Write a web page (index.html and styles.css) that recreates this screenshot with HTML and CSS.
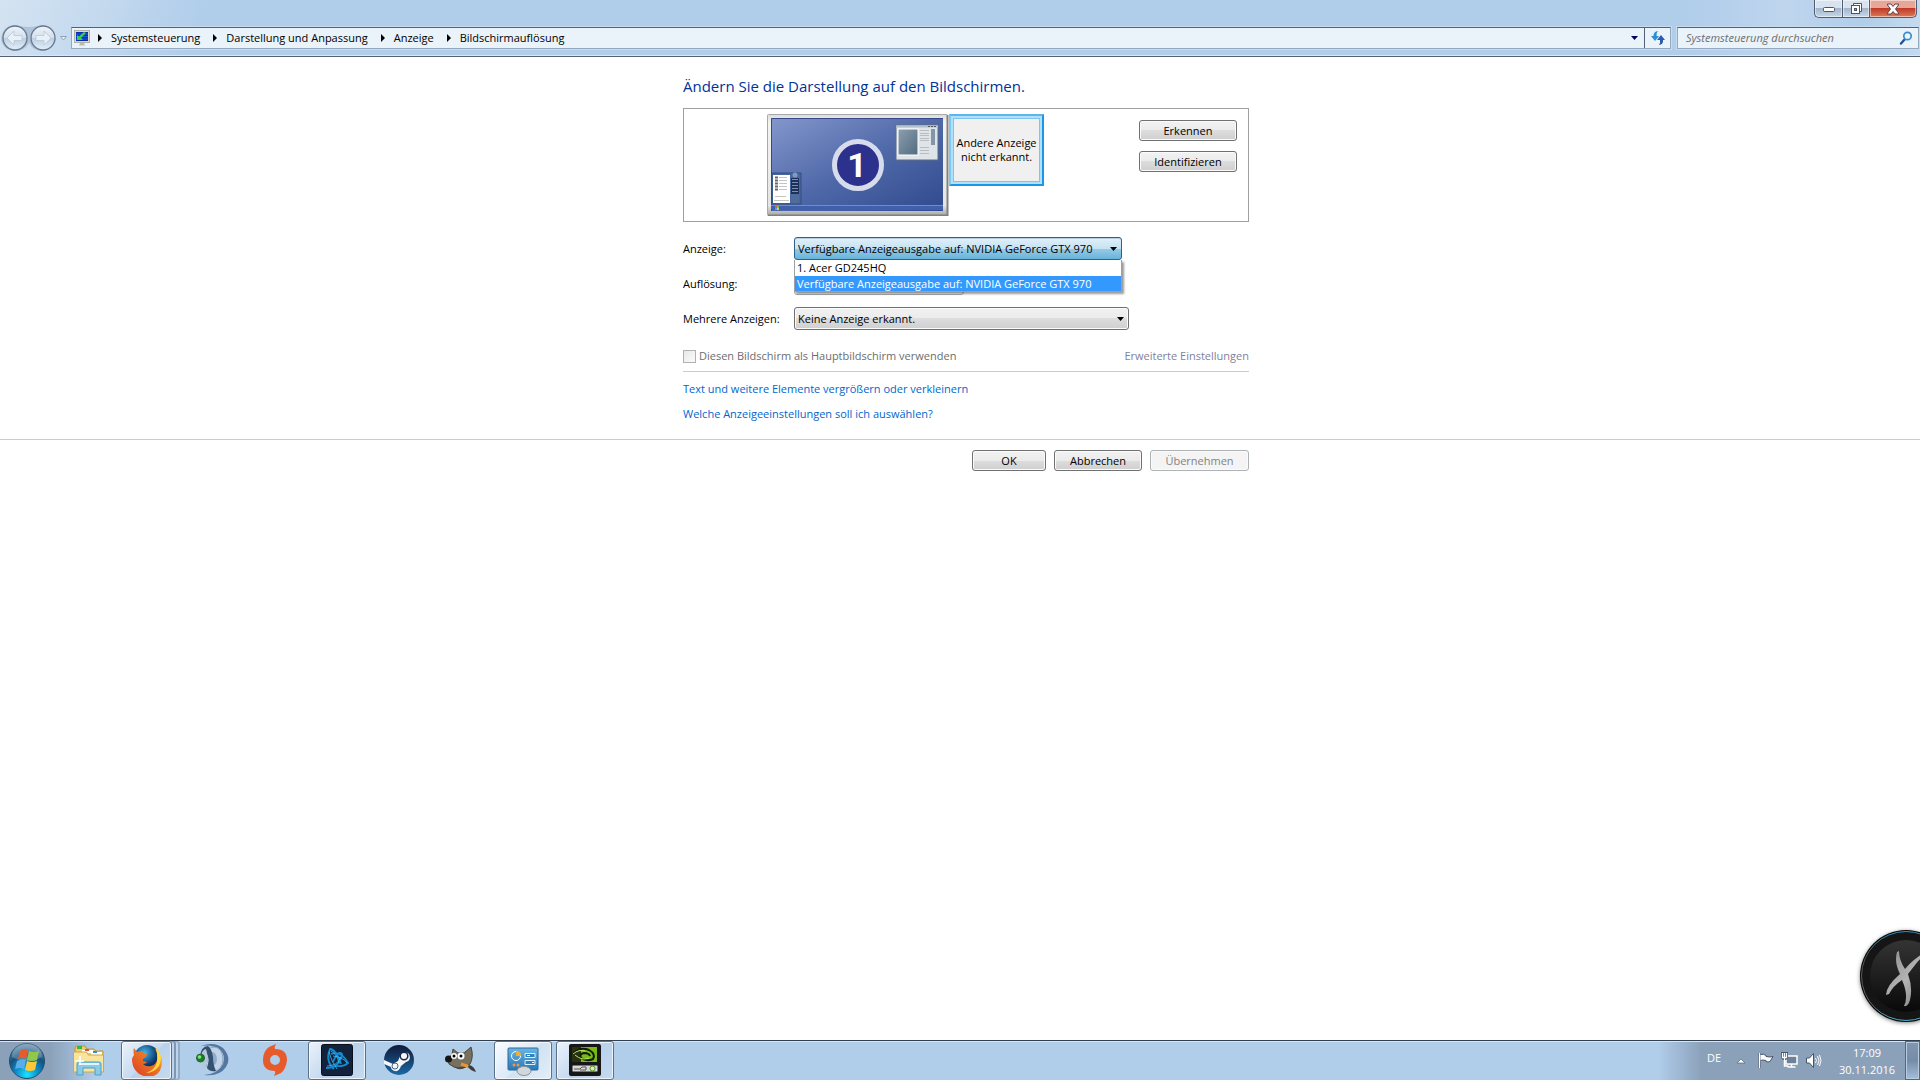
FILE: index.html
```html
<!DOCTYPE html>
<html lang="de">
<head>
<meta charset="utf-8">
<title>Bildschirmauflösung</title>
<link rel="stylesheet" href="styles.css">
</head>
<body>
<header class="frame">
  <div class="caption">
    <button class="cap cap-min" aria-label="Minimieren"><svg width="14" height="8" viewBox="0 0 14 8"><rect x="1.500" y="2.500" width="11" height="4" rx="1" fill="#fff" stroke="#4d5668"/></svg></button>
    <button class="cap cap-max" aria-label="Verkleinern"><svg width="13" height="13" viewBox="0 0 13 13"><path d="M3.500 3.500V1.500h8v8h-2" fill="#fff" stroke="#4d5668"/><rect x="1.500" y="3.500" width="8" height="8" fill="#fff" stroke="#4d5668"/><rect x="4.500" y="6.500" width="2" height="2" fill="#9aabc0" stroke="#4d5668"/></svg></button>
    <button class="cap cap-close" aria-label="Schließen"><svg width="14" height="12" viewBox="0 0 14 12"><path d="M1.500 1h3.500l2 2.500L9 1h3.500v1L9.500 6l3 4v1H9L7 8.500 5 11H1.500v-1l3-4-3-4z" fill="#fff" stroke="#5b4450"/></svg></button>
  </div>
  <div class="navbar">
    <svg class="nav-buttons" width="69" height="28" viewBox="0 0 69 28">
      <defs><linearGradient id="nb" x1="0" y1="0" x2="0" y2="1"><stop offset="0" stop-color="#eef4fa"/><stop offset=".48" stop-color="#d3e0ed"/><stop offset=".52" stop-color="#bccfe2"/><stop offset="1" stop-color="#e4f0fa"/></linearGradient></defs>
      <path d="M14 1Q29 5 43 1v3Q52 8 56 15 50 27 43 27q-10 0-14-8-4 8-14 8Q2 26 1 14 3 2 14 1z" fill="#a4b8ce" opacity=".7"/>
      <circle cx="15" cy="14" r="12" fill="url(#nb)" stroke="#68798f" stroke-width="1.300"/>
      <circle cx="43" cy="14" r="12" fill="url(#nb)" stroke="#68798f" stroke-width="1.300"/>
      <path d="M7 14l7-7v4.500h8v5h-8V21zM51 14l-7-7v4.500h-8v5h8V21z" fill="#e9f1f8" stroke="#b9c8d8" stroke-width=".8"/>
      <path d="M60.500 12.500h6L63.500 16z" fill="#e5eef7" stroke="#8fa5be"/>
    </svg>
    <nav class="address" aria-label="Adresse">
      <svg width="16" height="16" viewBox="0 0 16 16"><rect x=".5" y=".5" width="15" height="12" fill="#d8d8cf" stroke="#b0b0a8"/><rect x="2" y="2" width="12" height="9" fill="#0b2fa8"/><path d="M2 4h12M2 6.500h12M2 9h12" stroke="#1f58d8"/><path d="M3 10V5l2 1.500L10 2l2 1-5 5 2 2z" fill="#35d24a"/><path d="M6 13h4l1 2.500H5z" fill="#bcbcb4"/></svg>
      <ol class="crumbs">
        <li><svg class="tri" viewBox="0 0 4 8"><path d="M0 0l4 4-4 4z"/></svg><a href="#">Systemsteuerung</a></li>
        <li><svg class="tri" viewBox="0 0 4 8"><path d="M0 0l4 4-4 4z"/></svg><a href="#">Darstellung und Anpassung</a></li>
        <li><svg class="tri" viewBox="0 0 4 8"><path d="M0 0l4 4-4 4z"/></svg><a href="#">Anzeige</a></li>
        <li><svg class="tri" viewBox="0 0 4 8"><path d="M0 0l4 4-4 4z"/></svg><a href="#">Bildschirmauflösung</a></li>
      </ol>
      <button class="addr-drop" aria-label="Verlauf"><svg width="7" height="4" viewBox="0 0 7 4"><path d="M0 0h7L3.500 4z" fill="#000060"/></svg></button>
      <button class="addr-refresh" aria-label="Aktualisieren"><svg width="14" height="14" viewBox="0 0 14 14"><path d="M7 0Q2.500.5 2.500 5H0l4 5 4-5H5.500Q5 2 7 0z" fill="#2e8fd0"/><path d="M8 14q4.500-.5 4-5h2l-4-5-4 5h3q.5 3-1 5z" fill="#2b5aae"/></svg></button>
    </nav>
    <form class="search">
      <input type="search" placeholder="Systemsteuerung durchsuchen" aria-label="Systemsteuerung durchsuchen">
      <svg width="14" height="14" viewBox="0 0 14 14"><path d="M6 8L2 12.500" stroke="#27509c" stroke-width="2.400" stroke-linecap="round"/><circle cx="8.500" cy="5" r="3.700" fill="#e8f6fd" stroke="#3c8ccc" stroke-width="1.700"/></svg>
    </form>
  </div>
</header>

<main class="page">
  <section class="column">
    <h1>Ändern Sie die Darstellung auf den Bildschirmen.</h1>
    <div class="preview">
      <svg class="monitor" width="182" height="102" viewBox="0 0 182 102" role="img" aria-label="Anzeige 1">
        <defs>
          <linearGradient id="scr" x1="0" y1="0" x2="1" y2="1"><stop offset="0" stop-color="#8497cc"/><stop offset=".5" stop-color="#5069a9"/><stop offset="1" stop-color="#304a8e"/></linearGradient>
          <linearGradient id="pic" x1="0" y1="0" x2="1" y2="1"><stop offset="0" stop-color="#8c9fae"/><stop offset="1" stop-color="#526b82"/></linearGradient>
          <linearGradient id="bez" x1="0" y1="0" x2="0" y2="1"><stop offset="0" stop-color="#dcdcdc"/><stop offset=".08" stop-color="#f3f3f1"/><stop offset=".9" stop-color="#e5e5e3"/><stop offset="1" stop-color="#a6a6a6"/></linearGradient>
        </defs>
        <rect x=".5" y=".5" width="180" height="101" rx="1" fill="url(#bez)" stroke="#a9a9a9"/>
        <path d="M180.500 1v100.500H1" fill="none" stroke="#808080" stroke-width="2"/>
        <rect x="4" y="4" width="172" height="93" fill="url(#scr)"/>
        <path d="M4.500 97V4.500H176" fill="none" stroke="#35498a"/>
        <rect x="4" y="91" width="172" height="5" fill="#3f60ac"/><path d="M4 91.500h172" stroke="#6f8dcb"/>
        <rect x="8" y="92" width="2" height="2" fill="#e0633c"/><rect x="10" y="92" width="2" height="2" fill="#78c050"/><rect x="8" y="94" width="2" height="2" fill="#4aa0e8"/><rect x="10" y="94" width="2" height="2" fill="#e8cd4c"/>
        <rect x="129" y="11" width="42" height="35" fill="#dfe4e9" stroke="#5c6e86"/><path d="M129 12.500h42" stroke="#b4bfcc" stroke-width="2"/><path d="M161 12.500h9" stroke="#555" stroke-dasharray="2 1"/>
        <rect x="131" y="15" width="20" height="26" fill="url(#pic)" stroke="#fff"/>
        <path d="M153 16.500h9m-9 3h9m-9 2h9m-9 3h9m-9 2h9m-9 7h9m-9 3h9m-9 3h9" stroke="#b9bdc1"/><rect x="164" y="15" width="4" height="16" fill="#8296a8"/>
        <rect x="5" y="59" width="29" height="31" fill="#46679f" stroke="#354f82"/><path d="M24 75h8v14h-8z" fill="#4f6c9c"/><rect x="6" y="61" width="17" height="28" fill="#fff"/>
        <path d="M8 63.500h3m-3 3h3m-3 3h3m-3 3h3m-3 3h3" stroke="#666" stroke-width="2"/><path d="M12 63.500h8m-8 3h8m-8 3h8m-8 3h8m-8 3h8M8 82.500h11M7 86.500h15" stroke="#c4c4c4"/>
        <circle cx="28" cy="61" r="2.500" fill="#829ac0"/><path d="M24 64h8v16h-8z" fill="#1e3158"/><path d="M25 65.500h6m-6 3h6m-6 3h6m-6 3h6m-6 3h6" stroke="#7b8fb4"/>
        <circle cx="91" cy="51" r="23.500" fill="#2b318d" stroke="#d7dcec" stroke-width="5"/>
        <text x="90" y="63" class="monitor-number">1</text>
      </svg>
      <div class="monitor-missing">Andere Anzeige<br>nicht erkannt.</div>
      <div class="preview-actions"><button class="btn">Erkennen</button><button class="btn">Identifizieren</button></div>
    </div>

    <div class="fields">
      <label for="display">Anzeige:</label>
      <div class="combo combo-open">
        <select id="display"><option>Verfügbare Anzeigeausgabe auf: NVIDIA GeForce GTX 970</option></select>
        <svg class="arrow" width="7" height="4" viewBox="0 0 7 4"><path d="M0 0h7L3.500 4z"/></svg>
        <ul class="options" role="listbox" aria-label="Anzeige">
          <li role="option" aria-selected="false">1. Acer GD245HQ</li>
          <li role="option" aria-selected="true">Verfügbare Anzeigeausgabe auf: NVIDIA GeForce GTX 970</li>
        </ul>
      </div>
      <label for="resolution">Auflösung:</label>
      <div class="combo combo-small"><select id="resolution" disabled></select></div>
      <label for="multi">Mehrere Anzeigen:</label>
      <div class="combo">
        <select id="multi"><option>Keine Anzeige erkannt.</option></select>
        <svg class="arrow" width="7" height="4" viewBox="0 0 7 4"><path d="M0 0h7L3.500 4z"/></svg>
      </div>
    </div>

    <div class="main-row">
      <label><input type="checkbox" disabled>Diesen Bildschirm als Hauptbildschirm verwenden</label>
      <a href="#" class="muted">Erweiterte Einstellungen</a>
    </div>
    <div class="links">
      <a href="#">Text und weitere Elemente vergrößern oder verkleinern</a>
      <a href="#">Welche Anzeigeeinstellungen soll ich auswählen?</a>
    </div>
  </section>
  <footer class="footer">
    <div class="column actions">
      <button class="btn ok">OK</button><button class="btn cancel">Abbrechen</button><button class="btn apply" disabled>Übernehmen</button>
    </div>
  </footer>
  <div class="gadget-area">
    <svg class="gadget" width="96" height="96" viewBox="0 0 96 96" aria-hidden="true">
      <defs>
        <linearGradient id="gd" x1="0" y1="0" x2="0" y2="1"><stop offset="0" stop-color="#343434"/><stop offset="1" stop-color="#090909"/></linearGradient>
        <linearGradient id="gx" x1="0" y1="0" x2="1" y2="1"><stop offset="0" stop-color="#8a8a8a"/><stop offset=".5" stop-color="#b4b4b4"/><stop offset="1" stop-color="#707070"/></linearGradient>
        <linearGradient id="gr" x1="0" y1="0" x2="0" y2="1"><stop offset="0" stop-color="#318fc4"/><stop offset=".3" stop-color="#555"/><stop offset=".8" stop-color="#666"/><stop offset="1" stop-color="#48b5cf"/></linearGradient>
      </defs>
      <circle cx="48" cy="48" r="46" fill="#050505"/><circle cx="48" cy="48" r="44.500" fill="#151515" stroke="url(#gr)"/>
      <circle cx="48" cy="48" r="36" fill="url(#gd)"/>
      <path d="M41 23Q41 32 47 41 55 31 72 21 60 32 50 46 55 60 52 72 50 79 46 78 51 68 44 52 35 58 31 66L28 67Q28 58 42 46 36 34 39 24z" fill="url(#gx)"/>
    </svg>
  </div>
</main>

<footer class="taskbar">
  <button class="start" aria-label="Start"><svg width="38" height="38" viewBox="0 0 38 38">
    <defs><radialGradient id="orb" cx=".5" cy=".9" r=".9"><stop offset="0" stop-color="#1ee3ff"/><stop offset=".35" stop-color="#0a8fce"/><stop offset=".65" stop-color="#15527e"/><stop offset="1" stop-color="#7097b3"/></radialGradient></defs>
    <circle cx="19" cy="19" r="17.500" fill="url(#orb)" stroke="#234c6a"/><path d="M4 15a15 14 0 0 1 30 0q-15 8-30 0z" fill="#fff" opacity=".22"/>
    <path d="M12 9q5-3 8-1l-2 9q-4-2-8 0z" fill="#e9592b"/><path d="M21 9q5 2 10 0l-2 9q-5 2-10 0z" fill="#91c848"/><path d="M9 19q5-3 9-1l-2 9q-4-2-9 0z" fill="#58afe8"/><path d="M19 19q5 2 10 0l-2 9q-5 2-10 0z" fill="#fbc73b"/>
  </svg></button>
  <button class="task" aria-label="Explorer"><svg width="34" height="32" viewBox="0 0 34 32">
    <path d="M3 4q0-2 2-2h8l2 3h7l2 2h7v20H3z" fill="#edcc6c" stroke="#bd9736"/><path d="M5 2h5v3H5z" fill="#36b54a"/><path d="M10 6h11v3H10z" fill="#fff"/><path d="M13 5h4v2h-4z" fill="#dd5135"/><path d="M19 8h11v3H19z" fill="#fff"/><path d="M21 7h4v2h-4z" fill="#3490d4"/>
    <path d="M1.500 8h13l2 3h15v17h-30z" fill="#f8e49b" stroke="#cba84b"/><path d="M5 31V20q0-2 2-2h20q2 0 2 2v11h-6v-7H11v7z" fill="#89cae9" stroke="#4ba0ca"/><path d="M7 20h20" stroke="#dff5ff" stroke-width="2"/><path d="M8 12v9M3 17h9" stroke="#fff" stroke-width="1.500"/>
  </svg></button>
  <button class="task active stacked" aria-label="Firefox"><svg width="32" height="32" viewBox="0 0 32 32">
    <defs><radialGradient id="fx" cx=".4" cy=".3"><stop offset="0" stop-color="#42b6e6"/><stop offset="1" stop-color="#0b3268"/></radialGradient><linearGradient id="ff" x1="0" y1="1" x2="1" y2="0"><stop offset="0" stop-color="#d93b22"/><stop offset=".6" stop-color="#ee7626"/><stop offset="1" stop-color="#fddc40"/></linearGradient></defs>
    <circle cx="16" cy="14" r="13" fill="url(#fx)"/><path d="M3 4l3 4 5-1 1 2 4 1-1 3-3 2v2l4 1q-1 2-4 2 3 3 8 2 5-1 6-6 1-6-2-12 6 5 7 13 0 16-15 16Q2 30 1 17q0-4 2-6-1-4 0-7z" fill="url(#ff)"/><path d="M25 4q8 8 3 18-5 7-13 7 9-3 11-11 1-7-1-14z" fill="#ffd83e"/>
  </svg></button>
  <button class="task" aria-label="TeamSpeak"><svg width="34" height="34" viewBox="0 0 34 34">
    <path d="M5 3Q18-2 27 5q9 10 3 19-7 10-22 8 14-1 19-11 3-10-4-15Q15 1 5 3z" fill="#54769f"/>
    <ellipse cx="18" cy="16" rx="9" ry="12" fill="#c3d3e6" stroke="#8ba5c5"/><ellipse cx="16" cy="16" rx="5" ry="7" fill="#8facd0"/>
    <path d="M4 14Q5 3 12 3q4 3 5 11 0 8 3 14-6 1-9-3l2-8-3-10z" fill="#35516f"/>
    <path d="M5 13q1-6 5-7l2 10-3 10q-6-4-4-13z" fill="#b5c8db"/>
    <circle cx="4.500" cy="15" r="4" fill="#188029" stroke="#2e5b35"/><circle cx="3.500" cy="14" r="1.800" fill="#86e57b"/></svg></button>
  <button class="task" aria-label="Origin"><svg width="28" height="34" viewBox="0 0 28 34"><path d="M15 1q-2 3-1 5Q26 6 26 17q-1 9-6 13l-7 3q2-3 1-5Q2 28 2 17 2 8 8 4zM14 12a5 5 0 1 0 0 10 5 5 0 0 0 0-10z" fill="#e65b2b" fill-rule="evenodd"/></svg></button>
  <button class="task active" aria-label="Battle.net"><svg width="32" height="32" viewBox="0 0 32 32"><rect x=".5" y=".5" width="31" height="31" rx="2" fill="#14213b" stroke="#08101e"/><g fill="none" stroke="#128ad0" stroke-width="1.800"><path d="M13 25Q4 17 9 5q6 0 11 15"/><path d="M10 10q10-4 17 9-4 4-13 3"/><path d="M5 24q14 0 16-14-4-4-9 8"/></g><path d="M8 8q2 9 8 17M6 22q10 0 14-9M12 12q10 1 14 7M10 7q6 3 8 12" fill="none" stroke="#48b9ed" stroke-width=".8"/></svg></button>
  <button class="task" aria-label="Steam"><svg width="32" height="32" viewBox="0 0 32 32"><defs><linearGradient id="st" x1="0" y1="0" x2="0" y2="1"><stop offset="0" stop-color="#11193a"/><stop offset="1" stop-color="#1a69a3"/></linearGradient></defs><circle cx="16" cy="16" r="15" fill="url(#st)"/><path d="M1 16l9 4 5-3 2-5a5 5 0 1 1 6 6l-5 4q-2 6-6 5-4-1-4-4l-7-3z" fill="#f4f6f8"/><circle cx="21" cy="12" r="3.800" fill="#f4f6f8" stroke="#18284d" stroke-width="1.500"/><circle cx="12" cy="22" r="3" fill="none" stroke="#496785"/></svg></button>
  <button class="task" aria-label="GIMP"><svg width="34" height="28" viewBox="0 0 34 28"><path d="M27 1q3 10-1 17-8 7-16 3l-5-3q-2-7 3-9l1-6 5 4h6z" fill="#77705f" stroke="#48443c"/><path d="M8 19q6 5 17-1-4 6-11 5z" fill="#4c483f"/><circle cx="4.500" cy="13" r="3.500" fill="#161616"/><circle cx="10" cy="10" r="3" fill="#fff"/><circle cx="17" cy="10" r="3.500" fill="#fff"/><circle cx="10" cy="10" r="1.500"/><circle cx="17" cy="10" r="1.500"/><path d="M17 18l9 3" stroke="#e89632" stroke-width="3"/><path d="M25 19q5 1 7 7-5-1-8-5z" fill="#3c3c3b"/></svg></button>
  <button class="task active bright" aria-label="Systemsteuerung"><svg width="32" height="32" viewBox="0 0 32 32"><defs><linearGradient id="cp" x1="0" y1="0" x2="0" y2="1"><stop offset="0" stop-color="#69b5e4"/><stop offset="1" stop-color="#2877b8"/></linearGradient></defs><rect x="1" y="4" width="30" height="22" rx="1" fill="url(#cp)" stroke="#2c6898"/><circle cx="9" cy="12" r="4.500" fill="none" stroke="#fff"/><path d="M9 12V7q5 0 5 5z" fill="#f6ac32"/><path d="M18 9.500h10v4H18zM18 16.500h10v4H18z" fill="#2a83c2" stroke="#d9f1fe"/><path d="M20 11.500h3m2 7h2" stroke="#fff"/><circle cx="7" cy="21" r="1.500" fill="#ee9a39"/><circle cx="11" cy="21" r="1.500" fill="#ee9a39"/><ellipse cx="17" cy="27" rx="7" ry="4.500" fill="#d4d7da" stroke="#8c9198"/></svg></button>
  <button class="task active" aria-label="NVIDIA"><svg width="32" height="32" viewBox="0 0 32 32"><rect width="32" height="32" rx="2" fill="#171717"/><rect x="3" y="3" width="25" height="15" fill="#79ba17"/><path d="M3 3h9v15H3z" fill="#263210"/><path d="M4 10q7-8 16-4 7 4 4 9-6 3-12-1-2-4 3-5 5 0 6 3" fill="none" stroke="#101c06" stroke-width="2"/><path d="M4 10q6-5 12-3M6 11q7 6 14 3" fill="none" stroke="#b9e764"/><rect x="3.500" y="21.500" width="25" height="6" rx="1" fill="#d8d8d8" stroke="#777"/><path d="M5 25h6l2-2h4v3h-6" fill="none" stroke="#555"/><circle cx="23.500" cy="24.500" r="2.500" fill="#d8efb6" stroke="#4b941a"/></svg></button>
  <div class="tray">
    <span class="lang">DE</span>
    <svg class="chev" width="10" height="6" viewBox="0 0 10 6"><path d="M1 5l4-4 4 4z" fill="#fff" stroke="#53657a" stroke-width=".7"/></svg>
    <svg width="17" height="17" viewBox="0 0 17 17"><path d="M2.500 1v15" stroke="#46566a" stroke-width="3"/><path d="M3 2.500q4-1 6 1v1q4 1 7 0l-3 5q-2 1-4 0v-1q-3-1-6 0z" fill="#fff" stroke="#46566a"/><path d="M2.500 1v15" stroke="#fff" stroke-width="1.500"/></svg>
    <svg width="17" height="17" viewBox="0 0 17 17"><rect x="5" y="4" width="11" height="8" fill="#6d8199" stroke="#fff" stroke-width="1.500"/><path d="M10.500 12v3m-4 0h8M3.500 7v7h4" fill="none" stroke="#fff" stroke-width="1.500"/><path d="M0 0h7v6l-2 2H2L0 6z" fill="#46566a"/><path d="M1.500 1v4.500h4V1M3.500 1v7" fill="none" stroke="#fff" stroke-width="1.300"/></svg>
    <svg width="17" height="17" viewBox="0 0 17 17"><path d="M1.500 6h3l4-4.500v14L4.500 11h-3z" fill="#fff" stroke="#46566a"/><path d="M10.500 6q2 2.500 0 5M12.500 4q3 4.500 0 9M14.500 3q3 5.500 0 11" fill="none" stroke="#fff"/></svg>
    <time class="clock">17:09<br>30.11.2016</time>
  </div>
  <button class="show-desktop" aria-label="Desktop anzeigen"></button>
</footer>
</body>
</html>
```
FILE: styles.css
```css
* { box-sizing: border-box; }
body {
  margin: 0;
  min-height: 100vh;
  display: flex;
  flex-direction: column;
  background: #fff;
  color: #000;
  font: 11px/14px "Open Sans", "Noto Sans", sans-serif;
}
button, input, select { font: inherit; margin: 0; color: inherit; }
button { padding: 0; display: flex; align-items: center; justify-content: center; }
svg { display: block; flex: none; }
a { color: #0066cc; text-decoration: none; }

/* Window frame */
.frame {
  height: 57px;
  display: flex;
  flex-direction: column;
  border-bottom: 1px solid #536173;
  box-shadow: inset 0 -1px #d8e8f7;
  background:
    linear-gradient(115deg, #d4e3f1 0, #c5daef 90px, rgba(176, 205, 234, 0) 190px),
    linear-gradient(90deg, #b0cdea 88%, #bfd5ee 93%, #b0cdea 97%, #c5daef);
}
.caption { display: flex; justify-content: flex-end; height: 18px; padding-right: 3px; }
.cap {
  width: 27px;
  height: 18px;
  border: 1px solid #505d70;
  border-width: 0 0 1px 1px;
  background: linear-gradient(#d7e3ef 0 45%, #9fb2c7 45%, #c7d8e8);
  box-shadow: inset 0 0 0 1px rgba(255, 255, 255, .5);
}
.cap-min { width: 28px; border-bottom-left-radius: 5px; }
.cap-close {
  width: 48px;
  border-right-width: 1px;
  border-bottom-right-radius: 5px;
  background: linear-gradient(#e6a799 0 45%, #bc3522 45%, #dd7a57);
}
.navbar { display: flex; align-items: center; height: 40px; padding: 1px 1px 0 0; }
.nav-buttons { margin-right: 2px; }
.address, .search {
  display: flex;
  align-items: center;
  height: 22px;
  border: 1px solid #94a9bf;
  border-top-color: #536173;
  background: #eaf2fa;
  box-shadow: 0 0 0 1px #c8dcf0;
}
.address { flex: 1; padding-left: 2px; }
.crumbs { display: flex; flex: 1; list-style: none; margin: 0 0 0 8px; padding: 0; gap: 13px; }
.crumbs li { display: flex; align-items: center; gap: 9px; }
.crumbs a { color: #000; }
.tri { width: 4px; height: 8px; }
.addr-drop, .addr-refresh { width: 20px; height: 20px; border: 0; background: none; }
.addr-refresh { width: 26px; border-left: 1px solid #536173; }
.search { width: 242px; margin-left: 6px; padding: 0 5px 0 8px; }
.search input { flex: 1; min-width: 0; padding: 0; border: 0; outline: 0; background: none; font-style: italic; }
.search input::placeholder { color: #6d6d6d; opacity: 1; }

/* Settings page */
.page { flex: 1; display: flex; flex-direction: column; }
.column { width: 578px; max-width: 100%; margin: 0 auto; padding-left: 12px; }
h1 { margin: 19px 0 11px; font-size: 15px; line-height: 21px; font-weight: 400; color: #003399; }
.preview {
  display: flex;
  align-items: flex-start;
  height: 114px;
  padding: 5px 11px 5px 83px;
  border: 1px solid #a0a0a0;
}
.monitor-number { font: bold 34px Roboto, sans-serif; fill: #fff; text-anchor: middle; }
.monitor-missing {
  display: grid;
  place-items: center;
  width: 95px;
  height: 72px;
  border: 2px solid #1c97e8;
  border-left-color: #7cc8f5;
  border-top-color: #5db5ee;
  background: #f0f0f0;
  box-shadow: inset 0 0 0 2px #b2dffa, inset 0 0 0 3px #7fc4ee;
  text-align: center;
  white-space: nowrap;
}
.preview-actions { display: grid; gap: 10px; margin: 6px 0 0 auto; }
.btn {
  width: 98px;
  height: 21px;
  border: 1px solid #707070;
  border-radius: 3px;
  background: linear-gradient(#f2f2f2, #ebebeb 50%, #dddddd 50%, #cfcfcf);
  box-shadow: inset 0 0 0 1px #fbfbfb;
}
.btn:disabled { border-color: #adb2b5; background: #f4f4f4; color: #838383; }
.fields {
  display: grid;
  grid-template-columns: 111px 1fr;
  grid-auto-rows: 23px;
  gap: 12px 0;
  align-items: center;
  margin-top: 15px;
}
.combo { position: relative; width: 335px; }
.combo select {
  display: block;
  width: 100%;
  height: 23px;
  padding: 0 16px 0 3px;
  border: 1px solid #707070;
  border-radius: 3px;
  appearance: none;
  background: linear-gradient(#f2f2f2, #ebebeb 50%, #dddddd 50%, #cfcfcf);
  box-shadow: inset 0 0 0 1px #fbfbfb;
}
.combo-open { width: 328px; z-index: 1; }
.combo-open select {
  border-color: #2c628b;
  background: linear-gradient(#e0f0f9, #c6e2f2 50%, #98cce6 50%, #68b3db);
  box-shadow: inset 0 1px #b5cfe0;
}
.combo-small { width: 170px; }
.combo-small select:disabled { border-color: #adb2b5; background: #f4f4f4; opacity: 1; }
.arrow { position: absolute; right: 5px; top: 10px; }
.options {
  position: absolute;
  top: 23px;
  left: 0;
  right: 0;
  margin: 0;
  padding: 0;
  list-style: none;
  border: 1px solid #a0a0a0;
  border-top: 0;
  background: #fff;
  box-shadow: 2px 2px 2px rgba(0, 0, 0, .4);
  line-height: 16px;
}
.options li { height: 16px; padding-left: 2px; white-space: nowrap; }
.options [aria-selected="true"] { height: 15px; line-height: 15px; background: #3399ff; color: #fff; }
.main-row {
  display: flex;
  align-items: center;
  justify-content: space-between;
  height: 30px;
  margin-top: 12px;
  padding-bottom: 1px;
  border-bottom: 1px solid #cccccc;
  color: #6d6d6d;
}
.main-row label { display: flex; align-items: center; gap: 3px; }
.main-row input { appearance: none; width: 13px; height: 13px; border: 1px solid #b1b1b1; background: linear-gradient(135deg, #e8e8e8, #fafafa); }
.muted { color: #7f7f9c; }
.links { display: grid; justify-items: start; gap: 11px; margin: 10px 0 18px; }
.footer { border-top: 1px solid #cccccc; }
.actions { display: flex; justify-content: flex-end; gap: 8px; padding-top: 10px; }
.ok { width: 74px; }
.cancel { width: 88px; }
.apply { width: 99px; }
.gadget-area { flex: 1; display: flex; align-items: flex-end; justify-content: flex-end; overflow: hidden; padding-bottom: 16px; }
.gadget { margin-right: -34px; filter: drop-shadow(0 1px 2px rgba(0, 0, 0, .5)); }

/* Taskbar */
.taskbar {
  display: flex;
  height: 40px;
  gap: 4px;
  padding-left: 8px;
  border-top: 1px solid #323f50;
  box-shadow: inset 0 1px #d3e5f6;
  background: linear-gradient(90deg, #8ba1ba 50px, #b0cdea 96px, #b0cdea calc(100% - 262px), #8ba1ba calc(100% - 218px));
}
.start, .task, .show-desktop { border: 0; background: none; }
.start { width: 38px; margin-right: 10px; }
.task { width: 58px; padding-bottom: 2px; border: 1px solid transparent; border-radius: 3px; }
.task.active {
  border-color: #5c7187;
  background: linear-gradient(135deg, #eaf2fb, #c6daf0 50%, #b9d1eb 52%, #c4daf0);
  box-shadow: inset 0 0 0 1px rgba(255, 255, 255, .7);
}
.task.bright { background: linear-gradient(135deg, #fafcff, #dce9f7 50%, #d0e2f4 52%, #e2eefa); }
.task.stacked { width: 51px; margin: 0 8px 0 -1px; box-shadow: inset 0 0 0 1px rgba(255, 255, 255, .7), 3px 0 0 -1px #bcd4ed, 4px 0 0 0 #7f97b2, 7px 0 0 -1px #bcd4ed, 8px 0 0 0 #94abc4; }
.tray { display: flex; align-items: center; margin-left: auto; gap: 7px; color: #fff; }
.lang { margin: 0 8px 6px 0; }
.chev { margin-right: 4px; }
.clock { width: 68px; margin-left: 4px; text-align: center; line-height: 17px; }
.show-desktop {
  width: 15px;
  height: 39px;
  border: 1px solid #53677f;
  box-shadow: inset 0 0 0 1px #b8cbdf;
  background: linear-gradient(#8197b0, #758ca7 50%, #a3bedb);
}
```
